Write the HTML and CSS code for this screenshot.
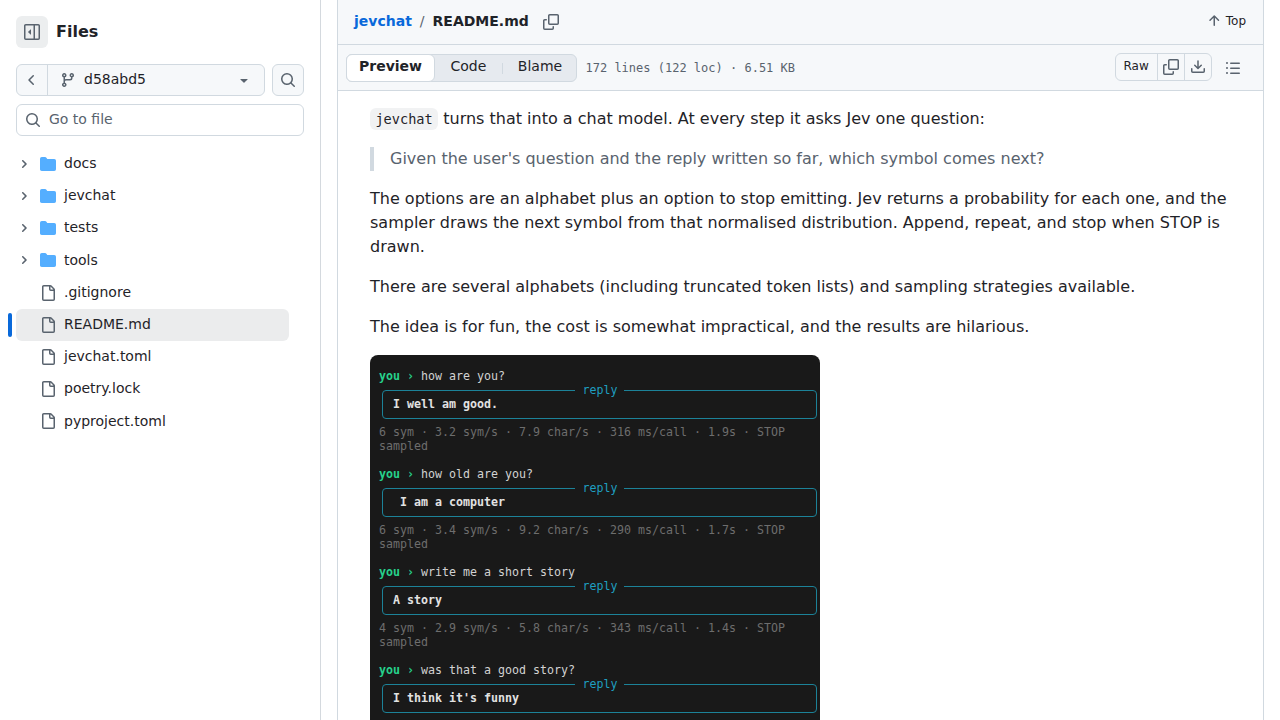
FILE: index.html
```html
<!DOCTYPE html>
<html lang="en">
<head>
<meta charset="utf-8">
<title>jevchat/README.md</title>
<link rel="stylesheet" href="styles.css">
</head>
<body>
<svg class="defs" width="0" height="0">
  <symbol id="i-sidebar" viewBox="0 0 16 16"><path d="m4.177 7.823 2.396-2.396A.25.25 0 0 1 7 5.604v4.792a.25.25 0 0 1-.427.177L4.177 8.177a.25.25 0 0 1 0-.354Z"/><path d="M0 1.75C0 .784.784 0 1.75 0h12.5C15.216 0 16 .784 16 1.75v12.5A1.75 1.75 0 0 1 14.25 16H1.75A1.75 1.75 0 0 1 0 14.25Zm1.75-.25a.25.25 0 0 0-.25.25v12.5c0 .138.112.25.25.25H9.5v-13Zm12.5 13a.25.25 0 0 0 .25-.25V1.75a.25.25 0 0 0-.25-.25H11v13Z"/></symbol>
  <symbol id="i-left" viewBox="0 0 16 16"><path d="M9.78 12.78a.75.75 0 0 1-1.06 0L4.47 8.53a.75.75 0 0 1 0-1.06l4.25-4.25a.751.751 0 0 1 1.042.018.751.751 0 0 1 .018 1.042L6.06 8l3.72 3.72a.75.75 0 0 1 0 1.06Z"/></symbol>
  <symbol id="i-branch" viewBox="0 0 16 16"><path d="M9.5 3.25a2.25 2.25 0 1 1 3 2.122V6A2.5 2.5 0 0 1 10 8.5H6a1 1 0 0 0-1 1v1.128a2.251 2.251 0 1 1-1.5 0V5.372a2.25 2.25 0 1 1 1.5 0v1.836A2.493 2.493 0 0 1 6 7h4a1 1 0 0 0 1-1v-.628A2.25 2.25 0 0 1 9.5 3.25Zm-6 0a.75.75 0 1 0 1.5 0 .75.75 0 0 0-1.5 0Zm8.25-.75a.75.75 0 1 0 0 1.5.75.75 0 0 0 0-1.5ZM4.25 12a.75.75 0 1 0 0 1.5.75.75 0 0 0 0-1.5Z"/></symbol>
  <symbol id="i-caret" viewBox="0 0 16 16"><path d="m4.427 7.427 3.396 3.396a.25.25 0 0 0 .354 0l3.396-3.396A.25.25 0 0 0 11.396 7H4.604a.25.25 0 0 0-.177.427Z"/></symbol>
  <symbol id="i-search" viewBox="0 0 16 16"><path d="M10.68 11.74a6 6 0 0 1-7.922-8.982 6 6 0 0 1 8.982 7.922l3.04 3.04a.749.749 0 0 1-.326 1.275.749.749 0 0 1-.734-.215ZM11.5 7a4.499 4.499 0 1 0-8.997 0A4.499 4.499 0 0 0 11.5 7Z"/></symbol>
  <symbol id="i-right" viewBox="0 0 12 12"><path d="M4.7 10c-.2 0-.4-.1-.5-.2-.3-.3-.3-.8 0-1.1L6.9 6 4.2 3.3c-.3-.3-.3-.8 0-1.1.3-.3.8-.3 1.1 0l3.3 3.2c.3.3.3.8 0 1.1L5.3 9.7c-.2.2-.4.3-.6.3Z"/></symbol>
  <symbol id="i-folder" viewBox="0 0 16 16"><path d="M1.75 1A1.75 1.75 0 0 0 0 2.75v10.5C0 14.216.784 15 1.75 15h12.5A1.75 1.75 0 0 0 16 13.25v-8.5A1.75 1.75 0 0 0 14.25 3H7.5a.25.25 0 0 1-.2-.1l-.9-1.2C6.07 1.26 5.55 1 5 1H1.75Z"/></symbol>
  <symbol id="i-file" viewBox="0 0 16 16"><path d="M2 1.75C2 .784 2.784 0 3.75 0h6.586c.464 0 .909.184 1.237.513l2.914 2.914c.329.328.513.773.513 1.237v9.586A1.75 1.75 0 0 1 13.25 16h-9.5A1.75 1.75 0 0 1 2 14.25Zm1.75-.25a.25.25 0 0 0-.25.25v12.5c0 .138.112.25.25.25h9.5a.25.25 0 0 0 .25-.25V6h-2.75A1.75 1.75 0 0 1 9 4.25V1.5Zm6.75.062V4.25c0 .138.112.25.25.25h2.688l-.011-.013-2.914-2.914-.013-.011Z"/></symbol>
  <symbol id="i-copy" viewBox="0 0 16 16"><path d="M0 6.75C0 5.784.784 5 1.75 5h1.5a.75.75 0 0 1 0 1.5h-1.5a.25.25 0 0 0-.25.25v7.5c0 .138.112.25.25.25h7.5a.25.25 0 0 0 .25-.25v-1.5a.75.75 0 0 1 1.5 0v1.5A1.75 1.75 0 0 1 9.25 16h-7.5A1.75 1.75 0 0 1 0 14.25Z"/><path d="M5 1.75C5 .784 5.784 0 6.75 0h7.5C15.216 0 16 .784 16 1.75v7.5A1.75 1.75 0 0 1 14.25 11h-7.5A1.75 1.75 0 0 1 5 9.25Zm1.75-.25a.25.25 0 0 0-.25.25v7.5c0 .138.112.25.25.25h7.5a.25.25 0 0 0 .25-.25v-7.5a.25.25 0 0 0-.25-.25Z"/></symbol>
  <symbol id="i-up" viewBox="0 0 16 16"><path d="M3.47 7.78a.75.75 0 0 1 0-1.06l4.25-4.25a.75.75 0 0 1 1.06 0l4.25 4.25a.751.751 0 0 1-.018 1.042.751.751 0 0 1-1.042.018L9 4.81v7.44a.75.75 0 0 1-1.5 0V4.81L4.53 7.78a.75.75 0 0 1-1.06 0Z"/></symbol>
  <symbol id="i-download" viewBox="0 0 16 16"><path d="M2.75 14A1.75 1.75 0 0 1 1 12.25v-2.5a.75.75 0 0 1 1.5 0v2.5c0 .138.112.25.25.25h10.5a.25.25 0 0 0 .25-.25v-2.5a.75.75 0 0 1 1.5 0v2.5A1.75 1.75 0 0 1 13.25 14Z"/><path d="M7.25 7.689V2a.75.75 0 0 1 1.5 0v5.689l1.97-1.969a.749.749 0 1 1 1.06 1.06l-3.25 3.25a.749.749 0 0 1-1.06 0L4.22 6.78a.749.749 0 1 1 1.06-1.06l1.97 1.969Z"/></symbol>
  <symbol id="i-list" viewBox="0 0 16 16"><path d="M5.75 2.5h8.5a.75.75 0 0 1 0 1.5h-8.5a.75.75 0 0 1 0-1.5Zm0 5h8.5a.75.75 0 0 1 0 1.5h-8.5a.75.75 0 0 1 0-1.5Zm0 5h8.5a.75.75 0 0 1 0 1.5h-8.5a.75.75 0 0 1 0-1.5ZM2 14a1 1 0 1 1 0-2 1 1 0 0 1 0 2Zm1-6a1 1 0 1 1-2 0 1 1 0 0 1 2 0ZM2 4a1 1 0 1 1 0-2 1 1 0 0 1 0 2Z"/></symbol>
</svg>
<div class="app">
  <aside class="sidebar">
    <div class="side-head"><span class="toggle"><svg class="icon"><use href="#i-sidebar"/></svg></span><h2>Files</h2></div>
    <div class="ref-row">
      <div class="ref-group">
        <span class="back"><svg class="icon"><use href="#i-left"/></svg></span>
        <span class="ref"><svg class="icon"><use href="#i-branch"/></svg><span class="ref-name">d58abd5</span><svg class="icon caret"><use href="#i-caret"/></svg></span>
      </div>
      <span class="search-btn"><svg class="icon"><use href="#i-search"/></svg></span>
    </div>
    <div class="goto"><svg class="icon"><use href="#i-search"/></svg><span>Go to file</span></div>
    <ul class="tree">
      <li><svg class="chev"><use href="#i-right"/></svg><svg class="icon folder"><use href="#i-folder"/></svg><span>docs</span></li>
      <li><svg class="chev"><use href="#i-right"/></svg><svg class="icon folder"><use href="#i-folder"/></svg><span>jevchat</span></li>
      <li><svg class="chev"><use href="#i-right"/></svg><svg class="icon folder"><use href="#i-folder"/></svg><span>tests</span></li>
      <li><svg class="chev"><use href="#i-right"/></svg><svg class="icon folder"><use href="#i-folder"/></svg><span>tools</span></li>
      <li class="file"><svg class="icon"><use href="#i-file"/></svg><span>.gitignore</span></li>
      <li class="file current"><svg class="icon"><use href="#i-file"/></svg><span>README.md</span></li>
      <li class="file"><svg class="icon"><use href="#i-file"/></svg><span>jevchat.toml</span></li>
      <li class="file"><svg class="icon"><use href="#i-file"/></svg><span>poetry.lock</span></li>
      <li class="file"><svg class="icon"><use href="#i-file"/></svg><span>pyproject.toml</span></li>
    </ul>
  </aside>
  <main class="panel">
    <header class="crumbs">
      <a class="repo">jevchat</a><span class="sep">/</span><strong>README.md</strong><svg class="icon copy"><use href="#i-copy"/></svg>
      <span class="top"><svg class="icon"><use href="#i-up"/></svg>Top</span>
    </header>
    <div class="toolbar">
      <div class="segments"><span class="seg active">Preview</span><span class="seg code">Code</span><span class="seg blame">Blame</span></div>
      <span class="meta">172 lines (122 loc) · 6.51 KB</span>
      <div class="actions"><span class="raw">Raw</span><span class="act"><svg class="icon"><use href="#i-copy"/></svg></span><span class="act last"><svg class="icon"><use href="#i-download"/></svg></span></div>
      <svg class="icon list"><use href="#i-list"/></svg>
    </div>
    <article class="markdown">
      <p><code>jevchat</code> turns that into a chat model. At every step it asks Jev one question:</p>
      <blockquote>Given the user's question and the reply written so far, which symbol comes next?</blockquote>
      <p>The options are an alphabet plus an option to stop emitting. Jev returns a probability for each one, and the sampler draws the next symbol from that normalised distribution. Append, repeat, and stop when STOP is drawn.</p>
      <p>There are several alphabets (including truncated token lists) and sampling strategies available.</p>
      <p>The idea is for fun, the cost is somewhat impractical, and the results are hilarious.</p>
      <div class="terminal">
        <div class="turn"><div class="line"><b>you ›</b> how are you?</div><div class="reply"><span class="label">reply</span>I well am good.</div><div class="stats">6 sym · 3.2 sym/s · 7.9 char/s · 316 ms/call · 1.9s · STOP<br>sampled</div></div>
        <div class="turn"><div class="line"><b>you ›</b> how old are you?</div><div class="reply"><span class="label">reply</span> &nbsp;I am a computer</div><div class="stats">6 sym · 3.4 sym/s · 9.2 char/s · 290 ms/call · 1.7s · STOP<br>sampled</div></div>
        <div class="turn"><div class="line"><b>you ›</b> write me a short story</div><div class="reply"><span class="label">reply</span>A story</div><div class="stats">4 sym · 2.9 sym/s · 5.8 char/s · 343 ms/call · 1.4s · STOP<br>sampled</div></div>
        <div class="turn last-turn"><div class="line"><b>you ›</b> was that a good story?</div><div class="reply"><span class="label">reply</span>I think it's funny</div></div>
      </div>
    </article>
  </main>
</div>
</body>
</html>
```
FILE: styles.css
```css
* { box-sizing: border-box; }
body {
  margin: 0;
  height: 720px;
  overflow: hidden;
  background: #fff;
  color: #1f2328;
  font: 14px/20px "DejaVu Sans", sans-serif;
}
.defs { display: block; }
.app { display: flex; height: 720px; overflow: hidden; }
.icon { width: 16px; height: 16px; fill: #59636e; flex: none; display: block; }

.sidebar { width: 321px; flex: none; padding: 16px 16px 0; border-right: 1px solid #d4d9de; }
.side-head { display: flex; align-items: center; gap: 8px; height: 32px; }
.side-head h2 { margin: 0; font-size: 16px; line-height: 24px; }
.toggle { width: 32px; height: 32px; padding: 8px; border-radius: 6px; background: #eceeef; }
.ref-row { display: flex; gap: 7px; margin-top: 16px; }
.ref-group { display: flex; width: 249px; height: 32px; border: 1px solid #d1d9e0; border-radius: 6px; background: #f6f8fa; }
.back { width: 31px; padding: 7px 0 0 7px; border-right: 1px solid #d1d9e0; }
.ref { display: flex; flex: 1; align-items: center; padding: 0 12px; }
.ref-name { flex: 1; margin-left: 8px; padding-bottom: 2px; }
.search-btn { width: 32px; height: 32px; padding: 7px; border: 1px solid #d1d9e0; border-radius: 6px; background: #f6f8fa; }
.goto { display: flex; align-items: center; gap: 8px; width: 288px; height: 32px; margin-top: 8px; padding: 0 8px; border: 1px solid #d1d9e0; border-radius: 6px; color: #59636e; }
.goto span { padding-bottom: 2px; }
.tree { list-style: none; margin: 11.68px 0 0; padding: 0; }
.tree li { display: flex; align-items: center; width: 273px; height: 32.2px; padding-left: 2px; border-radius: 6px; }
.tree li span { margin-left: 8px; padding-bottom: 1.4px; }
.tree .chev { width: 12px; height: 12px; margin-right: 10px; fill: #59636e; }
.tree .folder { fill: #54aeff; }
.tree .file { padding-left: 24px; }
.current { position: relative; background: #ebeced; }
.current::before { content: ""; position: absolute; left: -8px; top: 4px; width: 4px; height: 24px; border-radius: 6px; background: #0969da; }

.panel { width: 927px; margin-left: 16px; border: solid #d1d9e0; border-width: 0 1px; }
.crumbs { display: flex; align-items: center; height: 45px; padding: 0 17px 2px 16px; border-bottom: 1px solid #d1d9e0; background: #f6f8fa; }
.repo { color: #0969da; font-weight: 600; }
.sep { margin: 0 8px; color: #59636e; }
.copy { margin: 2px 0 0 14px; }
.top { display: flex; align-items: center; gap: 4px; margin-left: auto; font-size: 12px; }
.toolbar { display: flex; align-items: center; height: 46px; padding: 0 22px 0 8px; border-bottom: 1px solid #d1d9e0; background: #f6f8fa; }
.segments { display: flex; width: 231px; height: 28px; border: 1px solid #d1d9e0; border-radius: 6px; background: #e6eaef; }
.seg { height: 26px; line-height: 23px; }
.active { width: 89px; height: 28px; margin: -1px 0 0 -1px; padding: 0 0 0 12px; border: 1px solid #d1d9e0; border-radius: 6px; background: #fff; font-weight: 600; }
.code { padding: 0 16px 0 15.5px; }
.blame { position: relative; padding-left: 15.5px; }
.blame::before { content: ""; position: absolute; left: 0; top: 8px; width: 1px; height: 11px; background: #d1d9e0; }
.meta { margin-left: 8.5px; color: #59636e; font: 12px/18px "DejaVu Sans Mono", monospace; }
.actions { display: flex; width: 97px; height: 28px; margin: 0 13px 2px auto; border: 1px solid #d1d9e0; border-radius: 6px; }
.raw { width: 42px; padding-left: 7.5px; border-right: 1px solid #d1d9e0; font-size: 12px; line-height: 24px; }
.act { width: 27px; padding: 5px; border-right: 1px solid #d1d9e0; }
.last { width: 26px; border: 0; }

.markdown { padding: 16px 32px 0; font-size: 16px; line-height: 24px; }
.markdown p, .markdown blockquote { margin: 0 0 16px; }
.markdown blockquote { padding-left: 16px; border-left: 4px solid #d1d9e0; color: #59636e; }
.markdown code { padding: 3.2px 5.44px; border-radius: 6px; background: #f1f2f3; font: 13.6px "DejaVu Sans Mono", monospace; line-height: 16px; }
.terminal { width: 450px; height: 365px; padding: 14px 3px 0 9px; border-radius: 8px 8px 0 0; background: #191919; color: #d2d2d2; font: 11.63px/14px "DejaVu Sans Mono", monospace; }
.turn { height: 98px; }
.last-turn { height: 57px; }
.line b { color: #26d18c; }
.reply { position: relative; height: 29px; margin: 7px 0 6px 3px; padding: 6px 0 0 10px; border: 1px solid #1c8298; border-radius: 4px; color: #e2e2e2; font-weight: 700; }
.label { position: absolute; left: 192px; top: -8px; width: 49px; padding-left: 1px; background: #191919; color: #1f9fc0; font-weight: 400; text-align: center; }
.stats { color: #6d6d6d; }
```
